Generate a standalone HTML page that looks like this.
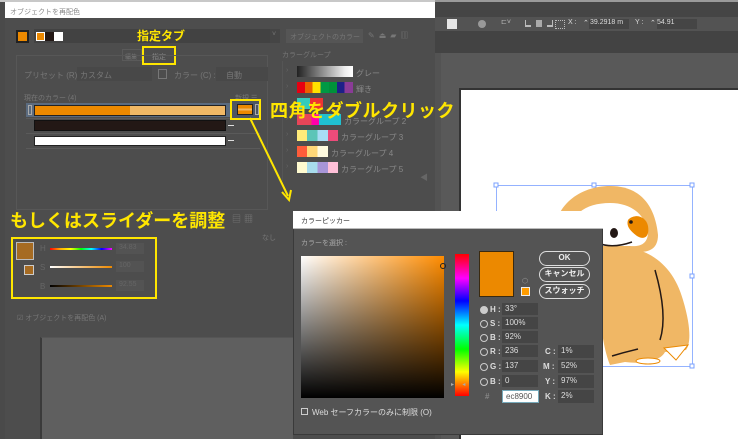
<!DOCTYPE html>
<html><head><meta charset="utf-8"><style>
*{margin:0;padding:0;box-sizing:border-box}
body{width:738px;height:439px;overflow:hidden;background:#535353;position:relative;font-family:"Liberation Sans","Noto Sans CJK JP",sans-serif;font-size:8px;color:#8a8a8a}
.a{position:absolute;white-space:nowrap}
.y{color:#ffe600;font-weight:bold;white-space:nowrap}
.yb{border:2px solid #ffe600}
.fld{background:#454545;color:#ddd;font-size:8px;padding-left:3px;line-height:12px}
.btn{border:1.5px solid #ddd;border-radius:8px;color:#eee;font-size:8px;text-align:center;line-height:12px;font-weight:bold}
.lbl{color:#ddd;font-size:8px;font-weight:bold}
.rad{width:8px;height:8px;border:1px solid #ccc;border-radius:50%}
.arr{position:absolute;left:4px;color:#666;font-size:7px}
</style></head><body>
<div class="a" style="left:435px;top:0;width:303px;height:17px;background:#454545"></div>
<div class="a" style="left:435px;top:0;width:303px;height:2px;background:#9a9a9a"></div>
<div class="a" style="left:435px;top:17px;width:303px;height:14px;background:#535353;color:#ddd;font-size:7px">
 <div class="a" style="left:12px;top:2px;width:10px;height:10px;background:#e6e6e6"></div>
 <div class="a" style="left:43px;top:3px;width:8px;height:8px;border-radius:50%;background:#999"></div>
 <div class="a" style="left:66px;top:1px;color:#bbb">⊏˅</div>
 <div class="a" style="left:90px;top:3px;width:6px;height:7px;border-left:1px solid #bbb;border-bottom:2px solid #bbb"></div>
 <div class="a" style="left:101px;top:3px;width:6px;height:7px;background:#aaa"></div>
 <div class="a" style="left:112px;top:3px;width:6px;height:7px;border-right:1px solid #bbb;border-bottom:2px solid #bbb"></div>
 <div class="a" style="left:120px;top:3px;width:10px;height:9px;border:1px dotted #bbb"></div>
 <div class="a" style="left:133px;top:2px;color:#ddd">X :</div>
 <div class="a" style="left:148px;top:2px">⌃</div>
 <div class="a" style="left:154px;top:2px;background:#454545;width:40px;height:10px;padding-left:1px">39.2918 m</div>
 <div class="a" style="left:200px;top:2px">Y :</div>
 <div class="a" style="left:215px;top:2px">⌃</div>
 <div class="a" style="left:222px;top:2px;background:#454545;width:40px;height:10px">54.91</div>
</div>
<div class="a" style="left:435px;top:31px;width:303px;height:22px;background:#434343"></div>
<div class="a" style="left:441px;top:53px;width:297px;height:386px;background:#595959"></div>
<div class="a" style="left:459px;top:88px;width:279px;height:351px;background:#333"></div>
<div class="a" style="left:461px;top:90px;width:277px;height:349px;background:#fff"></div>
<svg class="a" style="left:461px;top:90px" width="277" height="349" viewBox="461 90 277 349">
 <path d="M600 250 C640 240 672 260 683 300 C692 330 690 345 686 350 L665 352 C660 362 640 364 625 362 L610 365 C600 340 598 300 600 250Z" fill="#f0b765"/>
 <path d="M553 240 C553 205 580 186 610 186 C640 186 655 205 658 235 C658 248 650 252 640 252 L570 252 C560 252 553 250 553 240Z" fill="#f0b765"/>
 <path d="M568 240 C568 215 585 203 610 203 C632 203 645 215 648 232 C648 244 640 247 630 246 L580 246 C570 246 568 245 568 240Z" fill="#fff"/>
 <path d="M628 220 C634 213 646 216 648 226 C650 238 643 240 637 236 C630 231 626 226 628 220Z" fill="#ec8900"/>
 <ellipse cx="614" cy="233" rx="4" ry="5" fill="#231815"/>
 <circle cx="631" cy="222" r="1.8" fill="#231815"/>
 <path d="M598 243 Q612 249 632 242" stroke="#231815" stroke-width="1.5" fill="none"/>
 <path d="M655 270 Q668 315 660 340" stroke="#231815" stroke-width="1.5" fill="none"/>
 <path d="M612 356 Q625 352 638 349" stroke="#231815" stroke-width="1.5" fill="none"/>
 <path d="M664 348 L688 345 L676 360Z" fill="#fff" stroke="#ec8900"/>
 <ellipse cx="648" cy="361" rx="12" ry="3" fill="#fff" stroke="#ec8900"/>
 <rect x="496.5" y="185.5" width="196" height="181" fill="none" stroke="#7aa0ff" stroke-width="0.8"/>
 <rect x="494" y="183" width="4" height="4" fill="#fff" stroke="#7aa0ff"/>
 <rect x="592" y="183" width="4" height="4" fill="#fff" stroke="#7aa0ff"/>
 <rect x="690" y="183" width="4" height="4" fill="#fff" stroke="#7aa0ff"/>
 <rect x="690" y="274" width="4" height="4" fill="#fff" stroke="#7aa0ff"/>
 <rect x="690" y="364" width="4" height="4" fill="#fff" stroke="#7aa0ff"/>
</svg>

<div class="a" style="left:0;top:0;width:435px;height:2px;background:#c8c8c8"></div>
<div class="a" style="left:0;top:2px;width:5px;height:437px;background:#4a4a4a"></div>
<div class="a" style="left:5px;top:2px;width:430px;height:16px;background:#fff;color:#888;font-size:7px;padding:5px 5px">オブジェクトを再配色</div>
<div class="a" style="left:5px;top:18px;width:430px;height:421px;background:#4d4d4d"></div>
<div class="a" style="left:40px;top:337px;width:253px;height:102px;background:#5f5f5f;border-left:2px solid #3a3a3a;border-top:1px solid #555"></div>
<div class="a" style="left:16px;top:30px;width:13px;height:13px;border:2px solid #222;background:#ec8900"></div>
<div class="a" style="left:34px;top:29px;width:236px;height:14px;background:#424242"></div>
<div class="a" style="left:36px;top:32px;width:9px;height:9px;background:#ec8900;border:1px solid #fff"></div>
<div class="a" style="left:45px;top:32px;width:9px;height:9px;background:#231815"></div>
<div class="a" style="left:54px;top:32px;width:9px;height:9px;background:#fff"></div>
<div class="a" style="left:270px;top:29px;width:10px;height:14px;background:#454545;color:#777;font-size:7px;padding:2px">˅</div>
<div class="a" style="left:286px;top:29px;width:77px;height:14px;background:#555;color:#777;font-size:7px;padding:3px 4px;overflow:hidden">オブジェクトのカラー</div>
<div class="a" style="left:368px;top:30px;color:#777;font-size:8px;letter-spacing:4px">✎⏏▰▥</div>
<div class="a y" style="left:137px;top:27px;font-size:12px">指定タブ</div>
<div class="a" style="left:122px;top:49px;width:20px;height:12px;border:1px solid #5a5a5a;font-size:6px;padding:2px 2px;color:#777">編集</div>
<div class="a yb" style="left:142px;top:46px;width:34px;height:19px;color:#888;font-size:7px;padding:4px 8px">指定</div>
<div class="a" style="left:16px;top:55px;width:252px;height:155px;border:1px solid #575757"></div>
<div class="a" style="left:24px;top:70px;color:#777;font-size:8px">プリセット (R) :</div>
<div class="a" style="left:77px;top:67px;width:75px;height:14px;background:#484848;color:#777;padding:3px;font-size:8px">カスタム</div>
<div class="a" style="left:158px;top:69px;width:9px;height:10px;border:1px solid #777"></div>
<div class="a" style="left:174px;top:70px;color:#777">カラー (C) :</div>
<div class="a" style="left:216px;top:67px;width:52px;height:14px;background:#484848;color:#777;padding:3px 10px">自動</div>
<div class="a" style="left:24px;top:93px;color:#777;font-size:7px">現在のカラー (4)</div>
<div class="a" style="left:235px;top:93px;color:#777;font-size:7px">新規 ☰</div>
<div class="a" style="left:26px;top:103px;width:234px;height:14px;background:#5b6b7f"></div>
<div class="a" style="left:28px;top:105px;width:4px;height:10px;border:1px solid #aaa"></div>
<div class="a" style="left:34px;top:105px;width:192px;height:11px;border:1px solid #222;background:linear-gradient(90deg,#ec8900 0,#ec8900 50%,#f0b865 50%)"></div>
<div class="a" style="left:26px;top:118px;width:234px;height:1px;background:#5a5a5a"></div>
<div class="a" style="left:34px;top:120px;width:192px;height:11px;background:#231815;border:1px solid #111"></div>
<div class="a" style="left:228px;top:125px;width:6px;height:1px;background:#ddd"></div>
<div class="a" style="left:26px;top:133px;width:234px;height:1px;background:#5a5a5a"></div>
<div class="a" style="left:34px;top:136px;width:192px;height:10px;background:#fff;border:1px solid #222"></div>
<div class="a" style="left:228px;top:140px;width:6px;height:1px;background:#ddd"></div>
<div class="a" style="left:26px;top:148px;width:234px;height:1px;background:#5a5a5a"></div>
<div class="a" style="left:282px;top:50px;color:#777;font-size:7px">カラーグループ</div>
<div class="a" style="left:282px;top:61px;width:140px;height:120px;border-left:1px solid #555"></div>
<div class="a" style="left:282px;top:62px;width:140px;height:160px">
 <div class="arr" style="top:5px">›</div><div class="arr" style="top:21px">›</div><div class="arr" style="top:53px">›</div><div class="arr" style="top:69px">›</div><div class="arr" style="top:85px">›</div><div class="arr" style="top:101px">›</div>
 <div class="a" style="left:15px;top:4px;width:56px;height:11px;background:linear-gradient(90deg,#222,#444,#666,#888,#aaa,#ccc,#eee,#fff)"></div><div class="a" style="left:74px;top:6px;color:#888">グレー</div>
 <div class="a" style="left:15px;top:20px;width:56px;height:11px;background:linear-gradient(90deg,#e60012 14%,#ea6100 14% 28%,#ffe100 28% 42%,#009944 42% 57%,#00913a 57% 71%,#1d2088 71% 85%,#8a3b97 85%)"></div><div class="a" style="left:74px;top:22px;color:#888">輝き</div>
 <div class="a" style="left:15px;top:36px;width:26px;height:11px;background:linear-gradient(90deg,#3cb 50%,#e33 50%)"></div>
 <div class="a" style="left:15px;top:52px;width:44px;height:11px;background:linear-gradient(90deg,#e84558 33%,#f0a 33% 50%,#20c0d0 50%)"></div><div class="a" style="left:62px;top:54px;color:#888">カラーグループ 2</div>
 <div class="a" style="left:15px;top:68px;width:41px;height:11px;background:linear-gradient(90deg,#ffeb7a 25%,#5cc5b8 25% 50%,#a8dcf5 50% 75%,#ec4b7a 75%)"></div><div class="a" style="left:59px;top:70px;color:#888">カラーグループ 3</div>
 <div class="a" style="left:15px;top:84px;width:31px;height:11px;background:linear-gradient(90deg,#ff5c3a 33%,#ffd878 33% 66%,#fffbe0 66%)"></div><div class="a" style="left:49px;top:86px;color:#888">カラーグループ 4</div>
 <div class="a" style="left:15px;top:100px;width:41px;height:11px;background:linear-gradient(90deg,#fffbd0 25%,#a8dcec 25% 50%,#a896d8 50% 75%,#ffc0d8 75%)"></div><div class="a" style="left:59px;top:102px;color:#888">カラーグループ 5</div>
</div>
<div class="a" style="left:420px;top:172px;color:#666;font-size:8px">◀</div>
<div class="a yb" style="left:230px;top:99px;width:31px;height:21px;background:#4d5563"></div>
<div class="a" style="left:237px;top:104px;width:16px;height:11px;background:linear-gradient(#ec8900 0,#ec8900 40%,#f0b865 40%,#f0b865 60%,#ec8900 60%);border:1px solid #222"></div>
<div class="a" style="left:255px;top:104px;width:4px;height:11px;border:1px solid #aaa"></div>
<div class="a y" style="left:270px;top:97px;font-size:18px;letter-spacing:0.5px">四角をダブルクリック</div>
<svg class="a" style="left:240px;top:110px" width="60" height="95"><line x1="10" y1="8" x2="48" y2="86" stroke="#ffe600" stroke-width="2"/><path d="M42 82 L49 90 L51 80" stroke="#ffe600" stroke-width="2" fill="none"/></svg>
<div class="a y" style="left:10px;top:207px;font-size:18px">もしくはスライダーを調整</div>
<div class="a" style="left:232px;top:212px;color:#777;font-size:9px;letter-spacing:3px">▤▦</div>
<div class="a" style="left:262px;top:233px;color:#777;font-size:7px">なし</div>
<div class="a yb" style="left:11px;top:237px;width:146px;height:62px"></div>
<div class="a" style="left:16px;top:242px;width:18px;height:18px;background:#a66b22;border:1px solid #bbb"></div>
<div class="a" style="left:24px;top:265px;width:10px;height:10px;background:#a66b22;border:1px solid #ccc"></div>
<div class="a" style="left:40px;top:244px;color:#666">H</div>
<div class="a" style="left:40px;top:263px;color:#666">S</div>
<div class="a" style="left:40px;top:282px;color:#666">B</div>
<div class="a" style="left:50px;top:248px;width:62px;height:2px;background:linear-gradient(90deg,red,#fa0,#ff0,#0f0,#0ff,#00f,#f0f)"></div>
<div class="a" style="left:50px;top:266px;width:62px;height:2px;background:linear-gradient(90deg,#fff,#ec8900)"></div>
<div class="a" style="left:50px;top:285px;width:62px;height:2px;background:linear-gradient(90deg,#000,#ec8900)"></div>
<div class="a" style="left:116px;top:243px;width:28px;height:11px;background:#535353;color:#666;font-size:7px;padding:1px 3px">34.83</div>
<div class="a" style="left:116px;top:261px;width:28px;height:11px;background:#535353;color:#666;font-size:7px;padding:1px 3px">100</div>
<div class="a" style="left:116px;top:280px;width:28px;height:11px;background:#535353;color:#666;font-size:7px;padding:1px 3px">92.55</div>
<div class="a" style="left:17px;top:313px;color:#777;font-size:7px">☑ オブジェクトを再配色 (A)</div>

<div class="a" style="left:293px;top:211px;width:310px;height:224px;background:#545454;border:1px solid #3a3a3a"></div>
<div class="a" style="left:293px;top:211px;width:310px;height:18px;background:#fff;color:#333;font-size:7px;padding:5px 8px;border-bottom:1px solid #bbb">カラーピッカー</div>
<div class="a" style="left:301px;top:238px;color:#aaa;font-size:7px">カラーを選択 :</div>
<div class="a" style="left:301px;top:256px;width:143px;height:142px;background:linear-gradient(transparent,#000),linear-gradient(90deg,#fff,#ff8c00)"></div>
<div class="a" style="left:440px;top:263px;width:6px;height:6px;border:1px solid #222;border-radius:50%"></div>
<div class="a" style="left:455px;top:254px;width:14px;height:142px;background:linear-gradient(red,#f0f 17%,#00f 33%,#0ff 50%,#0f0 67%,#ff0 83%,red)"></div>
<div class="a" style="left:451px;top:381px;color:#aaa;font-size:6px">▸&nbsp;&nbsp;&nbsp;&nbsp;&nbsp;◂</div>
<div class="a" style="left:479px;top:251px;width:35px;height:46px;background:#ec8900;border:1px solid #3a2a10"></div>
<div class="a" style="left:521px;top:287px;width:9px;height:9px;background:#ff9c00;border:1px solid #eee"></div>
<div class="a" style="left:522px;top:277px;color:#999;font-size:7px">⬡</div>
<div class="a btn" style="left:539px;top:251px;width:51px;height:15px">OK</div>
<div class="a btn" style="left:539px;top:267px;width:51px;height:15px">キャンセル</div>
<div class="a btn" style="left:539px;top:284px;width:51px;height:15px">スウォッチ</div>
<div class="a" style="left:480px;top:305px">
 <div class="a rad" style="left:0;top:1px;background:#ccc;border-color:#ccc"></div><div class="a lbl" style="left:10px;top:0">H :</div><div class="a fld" style="left:22px;top:-2px;width:36px;height:12px">33°</div>
 <div class="a rad" style="left:0;top:15px"></div><div class="a lbl" style="left:10px;top:14px">S :</div><div class="a fld" style="left:22px;top:12px;width:36px;height:12px">100%</div>
 <div class="a rad" style="left:0;top:29px"></div><div class="a lbl" style="left:10px;top:28px">B :</div><div class="a fld" style="left:22px;top:26px;width:36px;height:12px">92%</div>
 <div class="a rad" style="left:0;top:43px"></div><div class="a lbl" style="left:10px;top:42px">R :</div><div class="a fld" style="left:22px;top:40px;width:36px;height:12px">236</div>
 <div class="a rad" style="left:0;top:58px"></div><div class="a lbl" style="left:10px;top:57px">G :</div><div class="a fld" style="left:22px;top:55px;width:36px;height:12px">137</div>
 <div class="a rad" style="left:0;top:73px"></div><div class="a lbl" style="left:10px;top:72px">B :</div><div class="a fld" style="left:22px;top:70px;width:36px;height:12px">0</div>
 <div class="a lbl" style="left:5px;top:87px;color:#888">#</div><div class="a fld" style="left:22px;top:85px;width:37px;height:13px;background:#fff;color:#555;border:1px solid #7ab">ec8900</div>
 <div class="a lbl" style="left:65px;top:42px">C :</div><div class="a fld" style="left:78px;top:40px;width:36px;height:13px">1%</div>
 <div class="a lbl" style="left:63px;top:57px">M :</div><div class="a fld" style="left:78px;top:55px;width:36px;height:13px">52%</div>
 <div class="a lbl" style="left:65px;top:72px">Y :</div><div class="a fld" style="left:78px;top:70px;width:36px;height:13px">97%</div>
 <div class="a lbl" style="left:65px;top:87px">K :</div><div class="a fld" style="left:78px;top:85px;width:36px;height:13px">2%</div>
</div>
<div class="a" style="left:301px;top:408px;width:7px;height:7px;border:1px solid #ccc"></div>
<div class="a lbl" style="left:312px;top:407px;font-weight:normal">Web セーフカラーのみに制限 (O)</div>
</body></html>
